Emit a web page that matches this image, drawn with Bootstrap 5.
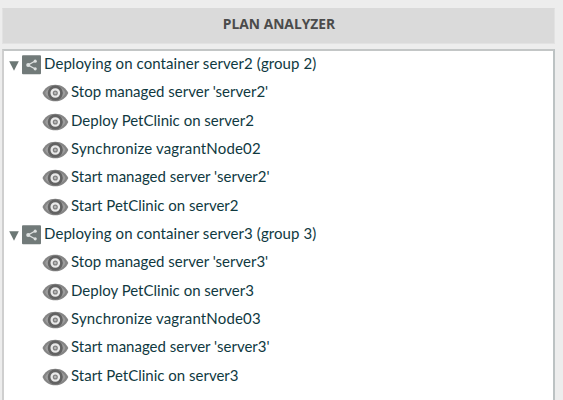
<!DOCTYPE html>
<html lang="en">
<head>
<meta charset="utf-8">
<meta name="viewport" content="width=device-width, initial-scale=1">
<title>Plan Analyzer</title>
<link href="https://cdn.jsdelivr.net/npm/bootstrap@5.3.0/dist/css/bootstrap.min.css" rel="stylesheet">
<style>
body { background: #ededed; height: 400px; padding: 8px 8px 0 2px; font-family: Lato, "Open Sans", sans-serif; }
.plan-title { height: 36px; flex: none; background: #dadada; border: 1px solid #e2e2e2; border-top-color: #dadada; color: #4b4b4b; font: 700 13.8px/30px "Open Sans", sans-serif; margin-bottom: 5px; padding-left: 1px; }
.plan-tree { background: #fff; border: solid #bcc2c3; border-width: 2px 2px 0 2px; border-left-color: #cfcfcf; border-top-color: #c3c6c6; color: #10393f; font-size: 15px; line-height: 20px; }
.tree-row { height: 28.32px; white-space: pre; }
.tree-row span { margin-top: -4px; }
.group-row { padding-left: 5px; letter-spacing: .08px; }
.step-row { padding-left: 38px; }
.sync-row { letter-spacing: .16px; }
.arrow { width: 10px; height: 10px; margin: 1px 3px 0 0; }
.share { width: 19px; height: 20px; margin: 0 3px 0 0; }
.eye { width: 27px; height: 18px; margin: 0 2px 0 0; }
</style>
</head>
<body class="d-flex flex-column overflow-hidden">
<svg class="d-none">
  <symbol id="arrow" viewBox="0 0 10 10"><path d="M.2 .3H9.800L5 9.800Z" fill="#6b7775"/></symbol>
  <symbol id="share" viewBox="0 0 19 20"><rect y=".3" width="19" height="19" rx="1" fill="#717a79"/><path d="M13.300 6 6 10l7.300 4" fill="none" stroke="#dde1e0" stroke-width="1.400"/><g fill="#dde1e0"><circle cx="13.200" cy="6.200" r="1.600"/><circle cx="6.200" cy="10" r="2"/><circle cx="13.200" cy="13.800" r="1.600"/></g></symbol>
  <symbol id="eye" viewBox="0 0 27 18"><path d="M.5 9C2.500 4 7 .7 13.300 .7S24 4 26.300 9C24 14 19.600 17.300 13.300 17.300S2.500 14 .5 9Z" fill="#858585"/><path d="M7.600 4.200C5 5.600 3.600 7.400 3.200 9c.4 1.600 1.800 3.400 4.400 4.800C6 11 6 7 7.600 4.200ZM19 4.200c2.600 1.400 4 3.200 4.400 4.800-.4 1.600-1.800 3.400-4.400 4.800C20.600 11 20.600 7 19 4.200Z" fill="#9c9c9c"/><circle cx="13.300" cy="9" r="7.500" fill="#626262"/><circle cx="13.300" cy="9" r="3.700" fill="#808080" stroke="#e9e9e9" stroke-width="2.300"/><circle cx="13.300" cy="9" r="1.300" fill="#b8b8b8"/></symbol>
</svg>
<header class="plan-title text-center">PLAN ANALYZER</header>
<main class="plan-tree flex-grow-1 overflow-hidden">
  <div class="tree-row group-row d-flex align-items-center"><svg class="arrow"><use href="#arrow"/></svg><svg class="share"><use href="#share"/></svg><span>Deploying on container server2 (group 2)</span></div>
  <div class="tree-row step-row d-flex align-items-center"><svg class="eye"><use href="#eye"/></svg><span>Stop managed server 'server2'</span></div>
  <div class="tree-row step-row d-flex align-items-center"><svg class="eye"><use href="#eye"/></svg><span>Deploy PetClinic on server2</span></div>
  <div class="tree-row step-row sync-row d-flex align-items-center"><svg class="eye"><use href="#eye"/></svg><span>Synchronize vagrantNode02</span></div>
  <div class="tree-row step-row d-flex align-items-center"><svg class="eye"><use href="#eye"/></svg><span>Start managed server 'server2'</span></div>
  <div class="tree-row step-row d-flex align-items-center"><svg class="eye"><use href="#eye"/></svg><span>Start PetClinic on server2</span></div>
  <div class="tree-row group-row d-flex align-items-center"><svg class="arrow"><use href="#arrow"/></svg><svg class="share"><use href="#share"/></svg><span>Deploying on container server3 (group 3)</span></div>
  <div class="tree-row step-row d-flex align-items-center"><svg class="eye"><use href="#eye"/></svg><span>Stop managed server 'server3'</span></div>
  <div class="tree-row step-row d-flex align-items-center"><svg class="eye"><use href="#eye"/></svg><span>Deploy PetClinic on server3</span></div>
  <div class="tree-row step-row sync-row d-flex align-items-center"><svg class="eye"><use href="#eye"/></svg><span>Synchronize vagrantNode03</span></div>
  <div class="tree-row step-row d-flex align-items-center"><svg class="eye"><use href="#eye"/></svg><span>Start managed server 'server3'</span></div>
  <div class="tree-row step-row d-flex align-items-center"><svg class="eye"><use href="#eye"/></svg><span>Start PetClinic on server3</span></div>
</main>
<script src="https://cdn.jsdelivr.net/npm/bootstrap@5.3.0/dist/js/bootstrap.bundle.min.js"></script>
</body>
</html>
